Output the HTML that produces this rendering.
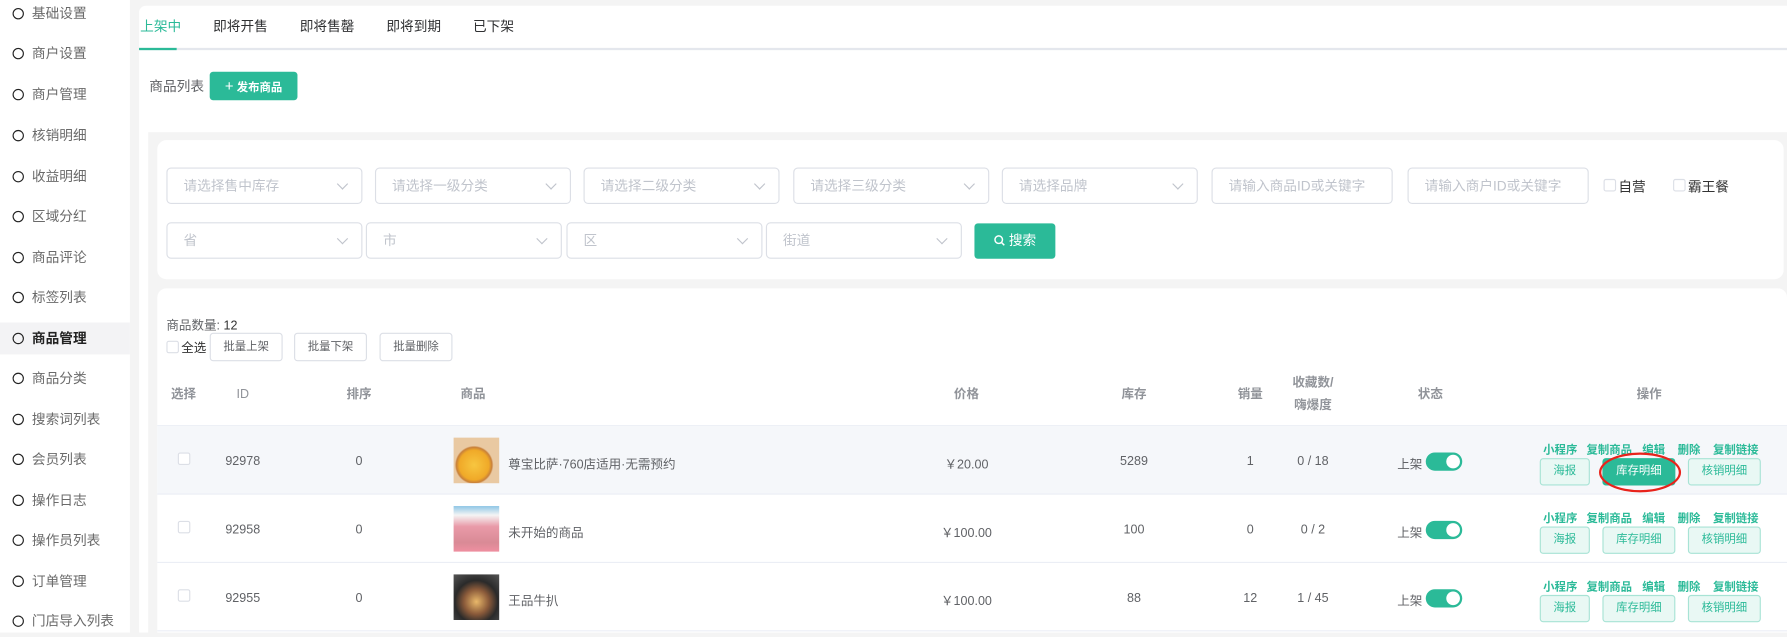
<!DOCTYPE html>
<html><head><meta charset="utf-8">
<style>
*{box-sizing:border-box;margin:0;padding:0}
html,body{width:1787px;height:633px;overflow:hidden;background:#f4f4f4}
body{font-family:"Liberation Sans","Noto Sans CJK SC",sans-serif;color:#606266}
#w{position:absolute;left:0;top:0;width:1568px;height:555px;transform:scale(1.1397);transform-origin:0 0;background:#f4f4f4}
.a{position:absolute}
.side{left:0;top:0;width:114px;height:555px;background:#fff}
.si{position:absolute;left:0;width:114px;height:28px;font-size:12px;color:#6a6a6a;line-height:28px;padding-left:28px}
.si:before{content:"";position:absolute;left:11px;top:9px;width:8px;height:8px;border:1.6px solid #222;border-radius:50%}
.si.on{background:#f3f3f5;color:#222;font-weight:bold}
.main{left:122px;top:5px;width:1446px;height:550px;background:#fff;border-radius:6px 0 0 0}
.tab{position:absolute;top:14px;font-size:12px;color:#303133}
.sel{position:absolute;height:32px;border:1px solid #dcdfe6;border-radius:4px;font-size:12px;color:#c0c4cc;line-height:30px;padding-left:14px;background:#fff}
.sel.dd:after{content:"";position:absolute;right:13px;top:10px;width:6px;height:6px;border-right:1px solid #c0c4cc;border-bottom:1px solid #c0c4cc;transform:rotate(45deg)}
.cb{position:absolute;width:11px;height:11px;border:1px solid #dcdfe6;border-radius:2px;background:#fff}
.btnw{position:absolute;height:25px;border:1px solid #dcdfe6;border-radius:3px;font-size:10px;color:#606266;text-align:center;line-height:23px;background:#fff}
.th{position:absolute;font-size:11px;color:#909399;font-weight:bold;transform:translateX(-50%);text-align:center;line-height:20px}
.td{position:absolute;font-size:11px;color:#606266;transform:translateX(-50%);white-space:nowrap}
.row{position:absolute;left:138px;width:1430px;height:60px;border-bottom:1px solid #ebeef5}
.lk{position:absolute;font-size:10px;color:#2bba98;font-weight:bold;white-space:nowrap}
.ob{position:absolute;height:24px;border:1px solid #a8e3d5;background:#e9f8f4;border-radius:3px;font-size:10px;color:#2bba98;text-align:center;line-height:22px}
.tg{position:absolute;width:32px;height:16px;border-radius:8px;background:#2bba98}
.tg:after{content:"";position:absolute;right:2px;top:2px;width:12px;height:12px;border-radius:50%;background:#fff}
</style></head><body><div id="w">
<div class="a side">
<div class="si" style="top:-2px">基础设置</div>
<div class="si" style="top:33px">商户设置</div>
<div class="si" style="top:69px">商户管理</div>
<div class="si" style="top:105px">核销明细</div>
<div class="si" style="top:141px">收益明细</div>
<div class="si" style="top:176px">区域分红</div>
<div class="si" style="top:212px">商品评论</div>
<div class="si" style="top:247px">标签列表</div>
<div class="si on" style="top:283px">商品管理</div>
<div class="si" style="top:318px">商品分类</div>
<div class="si" style="top:354px">搜索词列表</div>
<div class="si" style="top:389px">会员列表</div>
<div class="si" style="top:425px">操作日志</div>
<div class="si" style="top:460px">操作员列表</div>
<div class="si" style="top:496px">订单管理</div>
<div class="si" style="top:531px">门店导入列表</div>
</div>
<div class="a main"></div>
<div class="tab" style="left:123px;color:#2bba98">上架中</div>
<div class="tab" style="left:187px">即将开售</div>
<div class="tab" style="left:263px">即将售罄</div>
<div class="tab" style="left:339px">即将到期</div>
<div class="tab" style="left:415px">已下架</div>
<div class="a" style="left:122px;top:42px;width:1446px;height:2px;background:#e4e7ed"></div>
<div class="a" style="left:122px;top:42px;width:33px;height:2px;background:#2bba98"></div>
<div class="a" style="left:131px;top:67px;font-size:12px;color:#606266">商品列表</div>
<div class="a" style="left:184px;top:63px;width:77px;height:25px;background:#2bba98;border-radius:3px;color:#fff;font-size:10px;line-height:25px;text-align:center;font-weight:bold"><span style="font-size:13px;font-weight:normal">+</span> 发布商品</div>
<div class="a" style="left:130px;top:116px;width:1438px;height:439px;background:#f4f4f4"></div>
<div class="a" style="left:138px;top:123px;width:1427px;height:122px;background:#fff;border-radius:8px"></div>
<div class="sel dd" style="left:146px;top:147px;width:172px">请选择售中库存</div>
<div class="sel dd" style="left:329px;top:147px;width:172px">请选择一级分类</div>
<div class="sel dd" style="left:512px;top:147px;width:172px">请选择二级分类</div>
<div class="sel dd" style="left:696px;top:147px;width:172px">请选择三级分类</div>
<div class="sel dd" style="left:879px;top:147px;width:172px">请选择品牌</div>
<div class="sel" style="left:1063px;top:147px;width:159px">请输入商品ID或关键字</div>
<div class="sel" style="left:1235px;top:147px;width:159px">请输入商户ID或关键字</div>
<div class="cb" style="left:1407px;top:157px"></div><div class="a" style="left:1420px;top:155px;font-size:12px;color:#333">自营</div>
<div class="cb" style="left:1468px;top:157px"></div><div class="a" style="left:1481px;top:155px;font-size:12px;color:#333">霸王餐</div>
<div class="sel dd" style="left:146px;top:195px;width:172px">省</div>
<div class="sel dd" style="left:321px;top:195px;width:172px">市</div>
<div class="sel dd" style="left:497px;top:195px;width:172px">区</div>
<div class="sel dd" style="left:672px;top:195px;width:172px">街道</div>
<div class="a" style="left:855px;top:196px;width:71px;height:31px;background:#2bba98;border-radius:3px;color:#fff;font-size:12px;line-height:31px;text-align:center"><svg width="10" height="10" viewBox="0 0 10 10" style="vertical-align:-1px"><circle cx="4.3" cy="4.3" r="3.3" fill="none" stroke="#fff" stroke-width="1.3"/><path d="M6.7 6.7L9.2 9.2" stroke="#fff" stroke-width="1.3"/></svg> 搜索</div>
<div class="a" style="left:138px;top:253px;width:1430px;height:302px;background:#fff;border-radius:8px 8px 0 0"></div>
<div class="a" style="left:146px;top:277px;font-size:11px;color:#606266">商品数量: <span style="color:#333">12</span></div>
<div class="cb" style="left:146px;top:299px"></div><div class="a" style="left:159px;top:297px;font-size:11px;color:#333">全选</div>
<div class="btnw" style="left:184px;top:292px;width:64px">批量上架</div>
<div class="btnw" style="left:258px;top:292px;width:64px">批量下架</div>
<div class="btnw" style="left:333px;top:292px;width:64px">批量删除</div>
<div class="th" style="left:161px;top:336px">选择</div>
<div class="th" style="left:213px;top:336px;font-weight:normal">ID</div>
<div class="th" style="left:315px;top:336px">排序</div>
<div class="th" style="left:415px;top:336px">商品</div>
<div class="th" style="left:848px;top:336px">价格</div>
<div class="th" style="left:995px;top:336px">库存</div>
<div class="th" style="left:1097px;top:336px">销量</div>
<div class="th" style="left:1152px;top:326px">收藏数/<br>嗨爆度</div>
<div class="th" style="left:1255px;top:336px">状态</div>
<div class="th" style="left:1447px;top:336px">操作</div>
<div class="a" style="left:138px;top:373px;width:1430px;height:1px;background:#ebeef5"></div>

<div class="row" style="top:374px;background:#f5f7fa"></div>
<div class="row" style="top:434px"></div>
<div class="row" style="top:494px"></div>

<div class="cb" style="left:156px;top:397px"></div>
<div class="td" style="left:213px;top:399px">92978</div>
<div class="td" style="left:315px;top:399px">0</div>
<div class="a" style="left:398px;top:384px;width:40px;height:40px;background:radial-gradient(circle at 45% 60%,#f7c640 0,#f0a928 40%,#c8803a 48%,#e9c9a2 52%)"></div>
<div class="a" style="left:446px;top:399px;font-size:11px;color:#606266">尊宝比萨·760店适用·无需预约</div>
<div class="td" style="left:848px;top:399px">￥20.00</div>
<div class="td" style="left:995px;top:399px">5289</div>
<div class="td" style="left:1097px;top:399px">1</div>
<div class="td" style="left:1152px;top:399px">0 / 18</div>
<div class="a" style="left:1226px;top:399px;font-size:11px;color:#606266">上架</div><div class="tg" style="left:1251px;top:397px"></div>
<div class="lk" style="left:1354px;top:386px">小程序</div><div class="lk" style="left:1392px;top:386px">复制商品</div><div class="lk" style="left:1441px;top:386px">编辑</div><div class="lk" style="left:1472px;top:386px">删除</div><div class="lk" style="left:1503px;top:386px">复制链接</div>
<div class="ob" style="left:1351px;top:402px;width:44px">海报</div>
<div class="ob" style="left:1406px;top:402px;width:64px;background:#2bba98;color:#fff;border-color:#2bba98">库存明细</div>
<div class="ob" style="left:1481px;top:402px;width:64px">核销明细</div>
<div class="a" style="left:1403px;top:397px;width:72px;height:35px;border:2px solid #e8231b;border-radius:50%"></div>

<div class="cb" style="left:156px;top:457px"></div>
<div class="td" style="left:213px;top:459px">92958</div>
<div class="td" style="left:315px;top:459px">0</div>
<div class="a" style="left:398px;top:444px;width:40px;height:40px;background:linear-gradient(180deg,#8fc6e6 0,#f4f4f4 20%,#e99aa8 45%,#d98a96 80%,#ef8fa0 100%)"></div>
<div class="a" style="left:446px;top:459px;font-size:11px;color:#606266">未开始的商品</div>
<div class="td" style="left:848px;top:459px">￥100.00</div>
<div class="td" style="left:995px;top:459px">100</div>
<div class="td" style="left:1097px;top:459px">0</div>
<div class="td" style="left:1152px;top:459px">0 / 2</div>
<div class="a" style="left:1226px;top:459px;font-size:11px;color:#606266">上架</div><div class="tg" style="left:1251px;top:457px"></div>
<div class="lk" style="left:1354px;top:446px">小程序</div><div class="lk" style="left:1392px;top:446px">复制商品</div><div class="lk" style="left:1441px;top:446px">编辑</div><div class="lk" style="left:1472px;top:446px">删除</div><div class="lk" style="left:1503px;top:446px">复制链接</div>
<div class="ob" style="left:1351px;top:462px;width:44px">海报</div>
<div class="ob" style="left:1406px;top:462px;width:64px">库存明细</div>
<div class="ob" style="left:1481px;top:462px;width:64px">核销明细</div>

<div class="cb" style="left:156px;top:517px"></div>
<div class="td" style="left:213px;top:519px">92955</div>
<div class="td" style="left:315px;top:519px">0</div>
<div class="a" style="left:398px;top:504px;width:40px;height:40px;background:radial-gradient(circle at 50% 60%,#e9b86a 0,#8a5a3a 35%,#2a2a2a 60%,#555 100%)"></div>
<div class="a" style="left:446px;top:519px;font-size:11px;color:#606266">王品牛扒</div>
<div class="td" style="left:848px;top:519px">￥100.00</div>
<div class="td" style="left:995px;top:519px">88</div>
<div class="td" style="left:1097px;top:519px">12</div>
<div class="td" style="left:1152px;top:519px">1 / 45</div>
<div class="a" style="left:1226px;top:519px;font-size:11px;color:#606266">上架</div><div class="tg" style="left:1251px;top:517px"></div>
<div class="lk" style="left:1354px;top:506px">小程序</div><div class="lk" style="left:1392px;top:506px">复制商品</div><div class="lk" style="left:1441px;top:506px">编辑</div><div class="lk" style="left:1472px;top:506px">删除</div><div class="lk" style="left:1503px;top:506px">复制链接</div>
<div class="ob" style="left:1351px;top:522px;width:44px">海报</div>
<div class="ob" style="left:1406px;top:522px;width:64px">库存明细</div>
<div class="ob" style="left:1481px;top:522px;width:64px">核销明细</div>
</div></body></html>
